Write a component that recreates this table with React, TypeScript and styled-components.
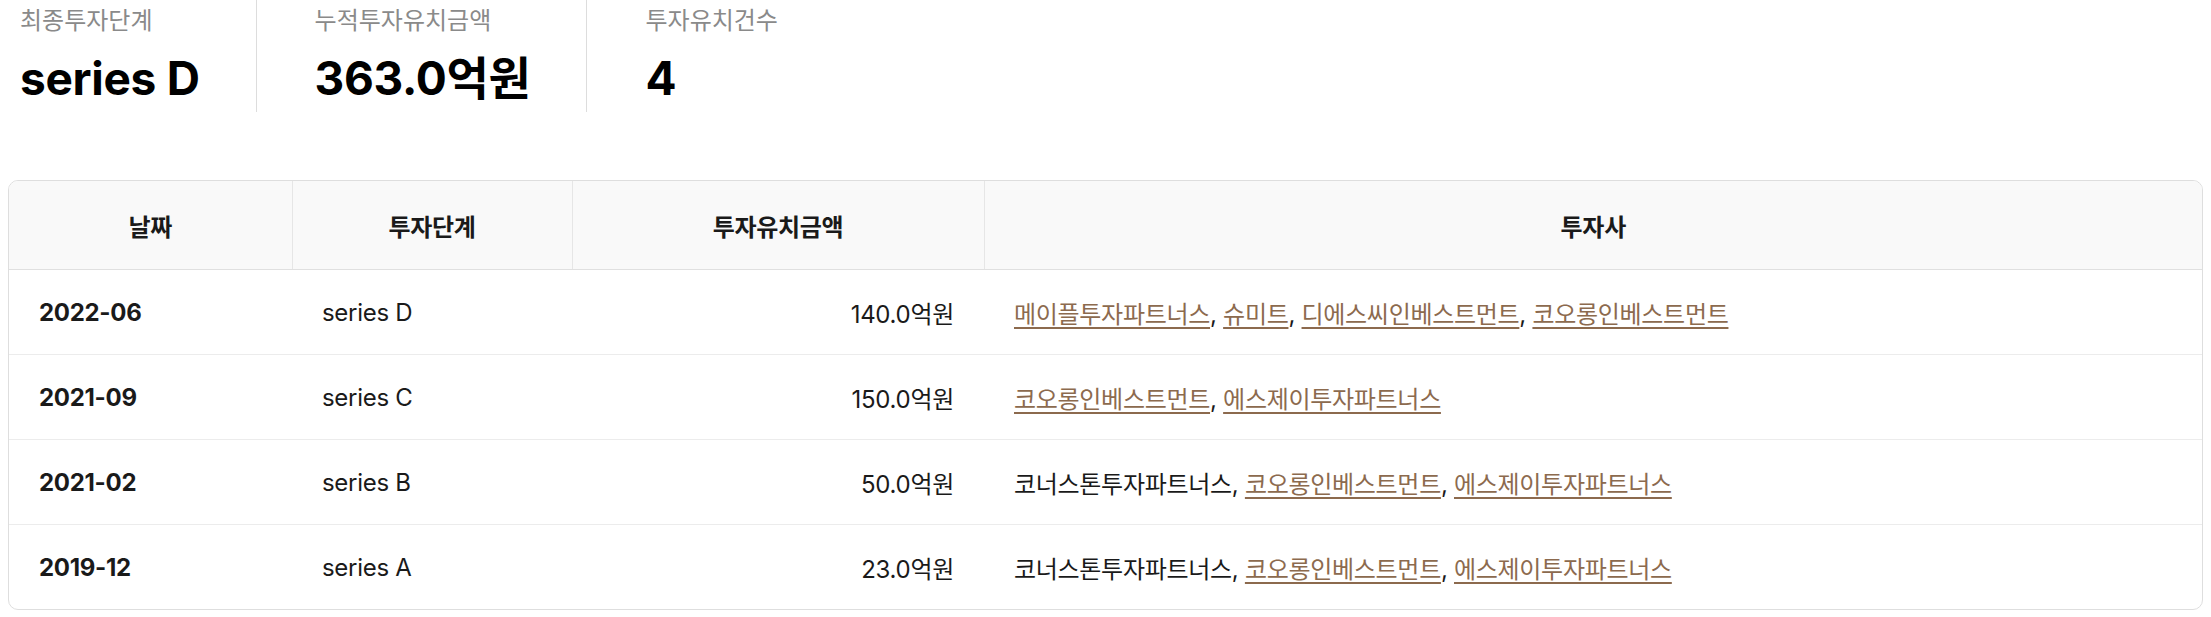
import { FC } from "react";
import styled, { createGlobalStyle } from "styled-components";

const GlobalStyle = createGlobalStyle`
  body {
    margin: 0;
    background: #fff;
    font-family: Inter, "Noto Sans CJK KR", sans-serif;
    color: #1a1a1a;
  }
`;

const Page = styled.div`
  padding: 0 8px;
`;

const Stats = styled.ul`
  display: flex;
  margin: 0;
  padding: 0;
  list-style: none;
`;

const StatItem = styled.li`
  display: flex;
  flex-direction: column;
  gap: 12px;
  padding: 5px 56px 5px 58px;
  border-right: 1px solid #dddddd;

  &:first-child {
    padding-left: 12px;
  }

  &:last-child {
    border-right: none;
  }
`;

const StatLabel = styled.span`
  font-size: 24px;
  line-height: 32px;
  color: #8a8a8a;
`;

const StatValue = styled.strong`
  font-size: 46px;
  line-height: 58px;
  font-weight: 700;
  color: #000;
  letter-spacing: -0.3px;
`;

const TableWrap = styled.div`
  margin-top: 68px;
  border: 1px solid #dedede;
  border-radius: 10px;
  overflow: hidden;
`;

const Table = styled.table`
  width: 100%;
  border-collapse: collapse;
  table-layout: fixed;
  font-size: 24px;
  letter-spacing: -0.3px;
`;

const Th = styled.th`
  height: 88px;
  padding: 0 30px;
  background: #f9f9f9;
  font-weight: 700;
  text-align: center;
  color: #1a1a1a;
  border-bottom: 1px solid #e0e0e0;
  border-left: 1px solid #e6e6e6;

  &:first-child {
    border-left: none;
  }
`;

const Row = styled.tr`
  & + & > td {
    border-top: 1px solid #ececec;
  }
`;

const Td = styled.td<{ $align?: "left" | "right"; $bold?: boolean }>`
  height: 84px;
  padding: 0 30px;
  text-align: ${(p) => p.$align ?? "left"};
  font-weight: ${(p) => (p.$bold ? 700 : 400)};
  color: #1a1a1a;
`;

const InvestorLink = styled.a`
  color: #8c6a4e;
  text-decoration: underline;
  text-underline-offset: 4px;
`;

type Investor = { name: string; linked: boolean };

type Round = {
  date: string;
  stage: string;
  amount: string;
  investors: Investor[];
};

const rounds: Round[] = [
  {
    date: "2022-06",
    stage: "series D",
    amount: "140.0억원",
    investors: [
      { name: "메이플투자파트너스", linked: true },
      { name: "슈미트", linked: true },
      { name: "디에스씨인베스트먼트", linked: true },
      { name: "코오롱인베스트먼트", linked: true },
    ],
  },
  {
    date: "2021-09",
    stage: "series C",
    amount: "150.0억원",
    investors: [
      { name: "코오롱인베스트먼트", linked: true },
      { name: "에스제이투자파트너스", linked: true },
    ],
  },
  {
    date: "2021-02",
    stage: "series B",
    amount: "50.0억원",
    investors: [
      { name: "코너스톤투자파트너스", linked: false },
      { name: "코오롱인베스트먼트", linked: true },
      { name: "에스제이투자파트너스", linked: true },
    ],
  },
  {
    date: "2019-12",
    stage: "series A",
    amount: "23.0억원",
    investors: [
      { name: "코너스톤투자파트너스", linked: false },
      { name: "코오롱인베스트먼트", linked: true },
      { name: "에스제이투자파트너스", linked: true },
    ],
  },
];

const App: FC = () => {
  return (
    <Page>
      <GlobalStyle />
      <Stats>
        <StatItem>
          <StatLabel>최종투자단계</StatLabel>
          <StatValue>series D</StatValue>
        </StatItem>
        <StatItem>
          <StatLabel>누적투자유치금액</StatLabel>
          <StatValue>363.0억원</StatValue>
        </StatItem>
        <StatItem>
          <StatLabel>투자유치건수</StatLabel>
          <StatValue>4</StatValue>
        </StatItem>
      </Stats>
      <TableWrap>
        <Table>
          <colgroup>
            <col style={{ width: 283 }} />
            <col style={{ width: 280 }} />
            <col style={{ width: 412 }} />
            <col />
          </colgroup>
          <thead>
            <tr>
              <Th>날짜</Th>
              <Th>투자단계</Th>
              <Th>투자유치금액</Th>
              <Th>투자사</Th>
            </tr>
          </thead>
          <tbody>
            {rounds.map((r) => (
              <Row key={r.date}>
                <Td $bold>{r.date}</Td>
                <Td>{r.stage}</Td>
                <Td $align="right">{r.amount}</Td>
                <Td>
                  {r.investors.map((inv, i) => (
                    <span key={inv.name}>
                      {i > 0 && ", "}
                      {inv.linked ? (
                        <InvestorLink href="#">{inv.name}</InvestorLink>
                      ) : (
                        inv.name
                      )}
                    </span>
                  ))}
                </Td>
              </Row>
            ))}
          </tbody>
        </Table>
      </TableWrap>
    </Page>
  );
};

export default App;
